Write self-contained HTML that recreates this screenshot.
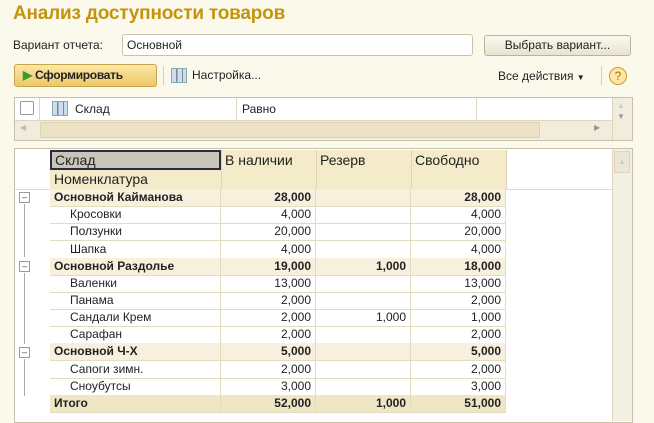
<!DOCTYPE html>
<html><head><meta charset="utf-8"><style>
*{box-sizing:border-box;margin:0;padding:0}
body{width:654px;height:419px;overflow:hidden;background:#fbf8ec;font-family:"Liberation Sans",sans-serif;font-size:12px;color:#222;position:relative}
.a{position:absolute}
.title{left:13px;top:3px;font-size:19px;font-weight:bold;color:#c4940c;white-space:nowrap;letter-spacing:-0.2px}
.btn{border:1px solid #bcb49a;border-radius:3px;background:linear-gradient(#fbf8ee,#e9e3cf)}
.row{position:absolute;left:50px;width:456px;height:18px;border-bottom:1px solid #e4dcc0;font-size:12px;line-height:17px}
.row div{position:absolute;top:0;height:17px;border-right:1px solid #e4dcc0;padding:0 4px;white-space:nowrap}
.c0{left:0;width:171px}.c1{left:171px;width:95px;text-align:right}.c2{left:266px;width:95px;text-align:right}.c3{left:361px;width:95px;text-align:right}
.g{background:#f6f0dc;font-weight:bold}
.t{background:#efe6c6;font-weight:bold}
.i .c0{padding-left:20px}
.minus{position:absolute;left:19px;width:11px;height:11px;border:1px solid #999;background:#fff;font-size:9px;line-height:8px;text-align:center;color:#444}
</style></head><body>
<div class="a title">Анализ доступности товаров</div>
<div class="a" style="left:13px;top:38px;font-size:12px">Вариант отчета:</div>
<div class="a" style="left:122px;top:34px;width:351px;height:22px;border:1px solid #c9c2aa;border-radius:3px;background:#fff;padding:3px 4px">Основной</div>
<div class="a btn" style="left:484px;top:35px;width:147px;height:21px;text-align:center;line-height:19px">Выбрать вариант...</div>
<div class="a" style="left:14px;top:64px;width:143px;height:23px;border:1px solid #c9a54a;border-radius:3px;background:linear-gradient(#fbe7a8,#ecc968);font-weight:bold;line-height:21px;padding-left:8px;letter-spacing:-0.3px"><span style="color:#3a9a2a">▶</span> Сформировать</div>
<div class="a" style="left:163px;top:66px;width:1px;height:19px;background:#d8d0b8"></div>
<div class="a" style="left:171px;top:68px;width:16px;height:15px;border:1px solid #8aa;background:linear-gradient(90deg,#cde 0 30%,#789 30% 40%,#cde 40% 70%,#789 70% 80%,#cde 80%)"></div>
<div class="a" style="left:192px;top:68px">Настройка...</div>
<div class="a" style="left:498px;top:69px">Все действия <span style="font-size:8px">▼</span></div>
<div class="a" style="left:601px;top:66px;width:1px;height:19px;background:#d8d0b8"></div>
<div class="a" style="left:609px;top:67px;width:18px;height:18px;border-radius:50%;border:1px solid #d09a30;background:#fce7a8;color:#b07010;font-size:12px;text-align:center;line-height:16px">?</div>
<!-- filter -->
<div class="a" style="left:14px;top:97px;width:619px;height:44px;border:1px solid #c9c2aa;background:#fff"></div>
<div class="a" style="left:20px;top:101px;width:14px;height:14px;border:1px solid #999;border-radius:2px;background:#fff"></div>
<div class="a" style="left:39px;top:98px;width:1px;height:22px;background:#e0d9c2"></div>
<div class="a" style="left:52px;top:101px;width:16px;height:15px;border:1px solid #8aa;background:linear-gradient(90deg,#cde 0 30%,#789 30% 40%,#cde 40% 70%,#789 70% 80%,#cde 80%)"></div>
<div class="a" style="left:75px;top:102px">Склад</div>
<div class="a" style="left:236px;top:98px;width:1px;height:22px;background:#e0d9c2"></div>
<div class="a" style="left:242px;top:102px">Равно</div>
<div class="a" style="left:476px;top:98px;width:1px;height:22px;background:#e0d9c2"></div>
<div class="a" style="left:15px;top:120px;width:597px;height:20px;background:#f1ecdc;border-top:1px solid #ddd5bd"></div>
<div class="a" style="left:40px;top:122px;width:500px;height:16px;background:#ece3c6;border:1px solid #ddd3b2"></div>
<div class="a" style="left:20px;top:123px;font-size:8px;color:#bbb">◀</div>
<div class="a" style="left:594px;top:123px;font-size:8px;color:#999">▶</div>
<div class="a" style="left:612px;top:98px;width:20px;height:42px;background:#f1ecdc;border-left:1px solid #ddd5bd"></div>
<div class="a" style="left:617px;top:101px;font-size:8px;color:#ccc">▲</div>
<div class="a" style="left:617px;top:112px;font-size:8px;color:#999">▼</div>
<!-- main -->
<div class="a" style="left:14px;top:148px;width:619px;height:275px;border:1px solid #c9c2aa;background:#fff"></div>
<div class="a" style="left:612px;top:149px;width:20px;height:272px;background:#f3efe2;border-left:1px solid #ddd5bd"></div>
<div class="a" style="left:614px;top:151px;width:16px;height:22px;background:#ebe6d6;border:1px solid #ddd5bd;font-size:8px;color:#ccc;text-align:center;line-height:20px">▲</div>
<div class="a" style="left:15px;top:189px;width:597px;height:1px;background:#e4dcc0"></div>
<div class="a" style="left:50px;top:150px;width:456px;height:39px;background:#f4ebca"></div>
<div class="a" style="left:50px;top:150px;width:171px;height:20px;background:#c9c5bb;border:2px solid #2a2a40;font-size:14px;line-height:16px;padding-left:3px">Склад</div>
<div class="a" style="left:54px;top:171px;font-size:14px">Номенклатура</div>
<div class="a" style="left:221px;top:150px;width:1px;height:39px;background:#e0d6b4"></div>
<div class="a" style="left:316px;top:150px;width:1px;height:39px;background:#e0d6b4"></div>
<div class="a" style="left:411px;top:150px;width:1px;height:39px;background:#e0d6b4"></div>
<div class="a" style="left:506px;top:150px;width:1px;height:39px;background:#e0d6b4"></div>
<div class="a" style="left:225px;top:152px;font-size:14px">В наличии</div>
<div class="a" style="left:320px;top:152px;font-size:14px">Резерв</div>
<div class="a" style="left:415px;top:152px;font-size:14px">Свободно</div>
<div class="a" style="left:24px;top:204px;width:1px;height:53px;background:#aaa"></div>
<div class="a" style="left:24px;top:273px;width:1px;height:71px;background:#aaa"></div>
<div class="a" style="left:24px;top:359px;width:1px;height:37px;background:#aaa"></div>
<div class="minus" style="top:192px">–</div>
<div class="minus" style="top:261px">–</div>
<div class="minus" style="top:347px">–</div>
<div class="row g" style="top:189px"><div class="c0">Основной Кайманова</div><div class="c1">28,000</div><div class="c2"></div><div class="c3">28,000</div></div>
<div class="row i" style="top:206.2px"><div class="c0">Кросовки</div><div class="c1">4,000</div><div class="c2"></div><div class="c3">4,000</div></div>
<div class="row i" style="top:223.3px"><div class="c0">Ползунки</div><div class="c1">20,000</div><div class="c2"></div><div class="c3">20,000</div></div>
<div class="row i" style="top:240.5px"><div class="c0">Шапка</div><div class="c1">4,000</div><div class="c2"></div><div class="c3">4,000</div></div>
<div class="row g" style="top:257.6px"><div class="c0">Основной Раздолье</div><div class="c1">19,000</div><div class="c2">1,000</div><div class="c3">18,000</div></div>
<div class="row i" style="top:274.8px"><div class="c0">Валенки</div><div class="c1">13,000</div><div class="c2"></div><div class="c3">13,000</div></div>
<div class="row i" style="top:292px"><div class="c0">Панама</div><div class="c1">2,000</div><div class="c2"></div><div class="c3">2,000</div></div>
<div class="row i" style="top:309.1px"><div class="c0">Сандали Крем</div><div class="c1">2,000</div><div class="c2">1,000</div><div class="c3">1,000</div></div>
<div class="row i" style="top:326.3px"><div class="c0">Сарафан</div><div class="c1">2,000</div><div class="c2"></div><div class="c3">2,000</div></div>
<div class="row g" style="top:343.4px"><div class="c0">Основной Ч-Х</div><div class="c1">5,000</div><div class="c2"></div><div class="c3">5,000</div></div>
<div class="row i" style="top:360.6px"><div class="c0">Сапоги зимн.</div><div class="c1">2,000</div><div class="c2"></div><div class="c3">2,000</div></div>
<div class="row i" style="top:377.7px"><div class="c0">Сноубутсы</div><div class="c1">3,000</div><div class="c2"></div><div class="c3">3,000</div></div>
<div class="row t" style="top:394.9px"><div class="c0">Итого</div><div class="c1">52,000</div><div class="c2">1,000</div><div class="c3">51,000</div></div>
</body></html>
